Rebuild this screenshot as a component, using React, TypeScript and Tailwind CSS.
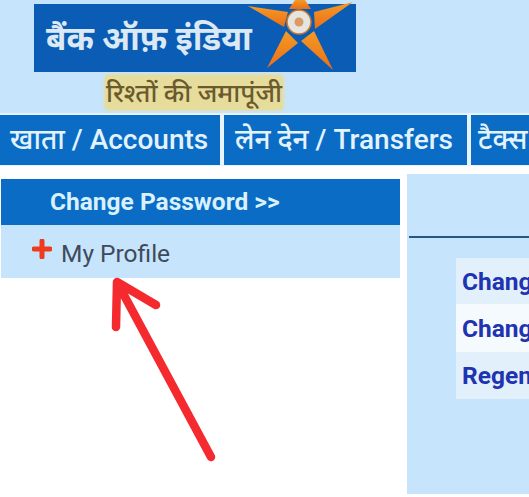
import React from 'react';

const font = { fontFamily: '"Roboto", "Noto Sans", "Noto Sans Devanagari", "Liberation Sans", sans-serif' };

const NavItem: React.FC<{ label: string; className: string }> = ({ label, className }) => (
  <div className={`h-[50px] shrink-0 flex items-center bg-[#0a6cc4] text-[#e3f3fd] text-[28px] font-medium whitespace-nowrap overflow-hidden ${className}`}>
    {label}
  </div>
);

const LinkRow: React.FC<{ label: string; className: string }> = ({ label, className }) => (
  <div className={`flex items-center pl-[6px] pt-[2px] text-[24.5px] font-bold text-[#2033b0] whitespace-nowrap ${className}`}>
    {label}
  </div>
);

export default function App() {
  return (
    <div className="relative w-[529px] h-[497px] overflow-hidden bg-white" style={font}>
      {/* Header */}
      <div className="h-[113px] bg-[#c6e4fb] pt-[4px] pl-[34px]">
        <div className="relative w-[322px] h-[68px] bg-[#0b5cb5] flex items-center pl-[12px]">
          <span className="text-[33px] font-bold text-[#dbe9f4] leading-none whitespace-nowrap">बैंक ऑफ़ इंडिया</span>
          <svg className="absolute left-[210px] top-[-4px]" width="112" height="72" viewBox="0 0 112 72">
            <defs>
              <linearGradient id="arm" x1="0" y1="0" x2="0" y2="1">
                <stop offset="0" stopColor="#f39a26" />
                <stop offset="1" stopColor="#ec6f16" />
              </linearGradient>
            </defs>
            <polygon points="45,9 67,9 61,0 51,0" fill="url(#arm)" />
            <polygon points="4,6 44,12 40,27" fill="url(#arm)" />
            <polygon points="109,2 70,12 71,29" fill="url(#arm)" />
            <polygon points="23,68 42,31 54,43" fill="url(#arm)" />
            <polygon points="89,70 57,41 70,31" fill="url(#arm)" />
            <circle cx="55" cy="22" r="12" fill="#e6e4df" stroke="#c9782c" strokeWidth="1.5" />
            <circle cx="55" cy="22" r="4.5" fill="#d99a63" />
          </svg>
        </div>
        <div className="ml-[71px] mt-[3px] w-[178px] h-[35px] rounded-[4px] bg-[#e6dc9c] shadow-[0_0_5px_#e6dc9c] flex items-center justify-center text-[26px] italic font-medium text-[#6b5a2c] leading-none whitespace-nowrap overflow-hidden">
          रिश्तों की जमापूंजी
        </div>
      </div>

      {/* Main nav */}
      <div className="flex bg-[#e8f4fd] gap-[4px] pt-[2px] pb-[1px]">
        <NavItem label="खाता / Accounts" className="w-[220px] pl-[10px]" />
        <NavItem label="लेन देन / Transfers" className="w-[243px] pl-[11px]" />
        <NavItem label="टैक्स" className="w-[100px] pl-[7px]" />
      </div>

      {/* Body */}
      <div className="flex pt-[8px] pl-[1px] gap-[7px]">
        <div className="w-[399px] shrink-0 pt-[5px]">
          <div className="h-[46px] bg-[#0a6cc4] pl-[49px] flex items-center text-[24.5px] font-bold text-[#d8f1fd]">
            Change Password &gt;&gt;
          </div>
          <div className="h-[53px] bg-[#c6e4fb] pl-[31px] flex items-center gap-[9px] text-[24.5px] text-[#3f4a5c]">
            <svg className="mb-[5px]" width="20" height="20" viewBox="0 0 20 20">
              <path d="M10 2v16M2 10h16" stroke="#ef3a1d" strokeWidth="5" strokeLinecap="round" />
            </svg>
            <span className="mt-[5px]">My Profile</span>
          </div>
        </div>

        <div className="flex-1 min-w-0 h-[320px] bg-[#c6e4fb] pl-[2px] overflow-hidden">
          <div className="h-[64px] border-b-2 border-[#27567f]" />
          <div className="mt-[20px] ml-[47px]">
            <LinkRow label="Change" className="h-[46px] bg-[#e2f0fb]" />
            <LinkRow label="Change" className="h-[48px] bg-[#f4fafe]" />
            <LinkRow label="Regenerate" className="h-[47px] bg-[#e2f0fb]" />
          </div>
        </div>
      </div>

      {/* Red annotation arrow */}
      <svg className="absolute left-0 top-0 pointer-events-none" width="529" height="497" viewBox="0 0 529 497">
        <path d="M211 457L118 284M116 327L117 282L156 305" fill="none" stroke="#f42a2f" strokeWidth="8.5" strokeLinecap="round" strokeLinejoin="round" />
      </svg>
    </div>
  );
}
